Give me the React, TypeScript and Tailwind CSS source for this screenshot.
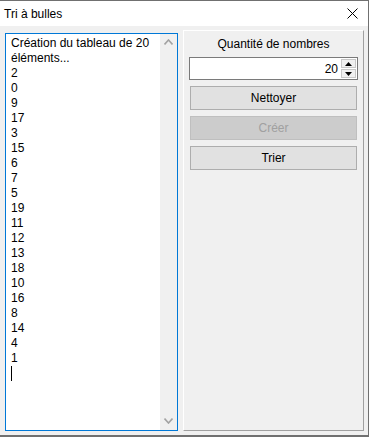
import React from 'react';

const font = { fontFamily: '"Liberation Sans", "Noto Sans", sans-serif' };

const lines = [
  'Création du tableau de 20',
  'éléments...',
  '2', '0', '9', '17', '3', '15', '6', '7', '5', '19', '11', '12', '13', '18', '10', '16', '8', '14', '4', '1',
];

const Chevron: React.FC<{ up?: boolean }> = ({ up }) => (
  <svg width="9" height="6" viewBox="0 0 9 6" className="block">
    <path
      d={up ? 'M0.5 5.5 L4.5 1 L8.5 5.5' : 'M0.5 0.5 L4.5 5 L8.5 0.5'}
      fill="none"
      stroke="#a3a3a3"
      strokeWidth="1.6"
    />
  </svg>
);

const Button: React.FC<{ label: string; disabled?: boolean }> = ({ label, disabled }) => (
  <div
    className={`mx-[6px] h-[24px] flex items-center justify-center border text-[12px] ${
      disabled ? 'bg-[#cccccc] border-[#bfbfbf] text-[#a0a0a0]' : 'bg-[#e1e1e1] border-[#adadad] text-black'
    }`}
  >
    {label}
  </div>
);

export default function App() {
  return (
    <div
      className="w-[369px] h-[437px] flex flex-col border-t border-r border-b-2 border-[#707070] bg-[#f0f0f0] text-black select-none"
      style={font}
    >
      {/* title bar */}
      <div className="h-[25px] bg-white flex items-center justify-between pl-[4px] pr-[10px] shrink-0">
        <span className="text-[12px]">Tri à bulles</span>
        <svg width="11" height="11" viewBox="0 0 11 11">
          <path d="M0.5 0.5 L10.5 10.5 M10.5 0.5 L0.5 10.5" stroke="#000" strokeWidth="1" />
        </svg>
      </div>

      <div className="flex-1 flex pt-[4px] pl-[5px] pr-[4px] pb-[4px] gap-[5px]">
        {/* output text box */}
        <div className="mt-[3px] w-[173px] h-[398px] border border-[#0078d7] bg-white flex">
          <div className="flex-1 pl-[5px] pt-[2px] text-[12px] leading-[15px] overflow-hidden">
            {lines.map((l, i) => (
              <div key={i} className="whitespace-nowrap">{l}</div>
            ))}
            <div className="w-px h-[15px] bg-black" />
          </div>
          <div className="w-[17px] bg-[#f0f0f0] flex flex-col items-center justify-between pt-[5px] pb-[6px]">
            <Chevron up />
            <Chevron />
          </div>
        </div>

        {/* settings panel */}
        <div className="w-[181px] h-[401px] border border-l-white border-t-white border-r-[#a0a0a0] border-b-[#a0a0a0] flex flex-col pt-[6px]">
          <div className="text-center text-[12px] leading-[15px]">Quantité de nombres</div>
          <div className="mx-[5px] mt-[5px] h-[23px] border border-[#7a7a7a] bg-white flex items-center">
            <div className="flex-1 text-right text-[12px] pr-[3px]">20</div>
            <div className="w-[16px] h-full flex flex-col gap-px py-px pr-px">
              <div className="flex-1 bg-[#f0f0f0] border border-[#c8c8c8] flex items-center justify-center">
                <svg width="7" height="4" viewBox="0 0 7 4"><path d="M0 4 L3.5 0 L7 4 Z" fill="#000" /></svg>
              </div>
              <div className="flex-1 bg-[#f0f0f0] border border-[#c8c8c8] flex items-center justify-center">
                <svg width="7" height="4" viewBox="0 0 7 4"><path d="M0 0 L3.5 4 L7 0 Z" fill="#000" /></svg>
              </div>
            </div>
          </div>
          <div className="flex flex-col gap-[6px] mt-[6px]">
            <Button label="Nettoyer" />
            <Button label="Créer" disabled />
            <Button label="Trier" />
          </div>
        </div>
      </div>
    </div>
  );
}
